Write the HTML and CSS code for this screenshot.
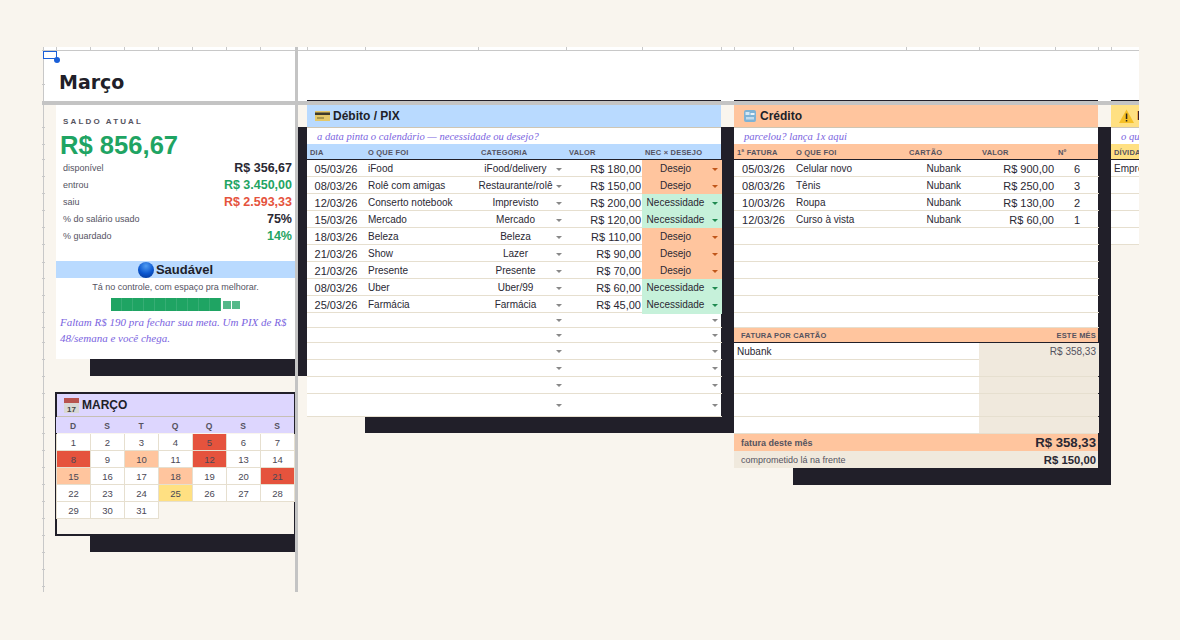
FILE: index.html
```html
<!DOCTYPE html>
<html lang="pt-BR">
<head>
  <meta charset="UTF-8">
  <title>Março</title>
  <link rel="stylesheet" href="styles.css">
</head>
<body>
  <div class="sheet">
    <div class="title-row"><h1>Março</h1></div>

    <div class="content">
      <div class="side">
        <section class="saldo">
          <div class="saldo-label">SALDO ATUAL</div>
          <div class="saldo-value">R$ 856,67</div>
          <div class="stat"><span>disponível</span><b>R$ 356,67</b></div>
          <div class="stat"><span>entrou</span><b class="green">R$ 3.450,00</b></div>
          <div class="stat"><span>saiu</span><b class="red">R$ 2.593,33</b></div>
          <div class="stat"><span>% do salário usado</span><b>75%</b></div>
          <div class="stat"><span>% guardado</span><b class="green">14%</b></div>
          <div class="status">
            <svg class="ico-ball" viewBox="0 0 16 16">
              <defs>
                <radialGradient id="ball" cx="50%" cy="25%" r="80%">
                  <stop offset="0" stop-color="#4f9cf2"/>
                  <stop offset="0.6" stop-color="#0c57cf"/>
                  <stop offset="1" stop-color="#063a9c"/>
                </radialGradient>
              </defs>
              <circle cx="8" cy="8" r="8" fill="url(#ball)"/>
            </svg>
            Saudável
          </div>
          <div class="status-text">Tá no controle, com espaço pra melhorar.</div>
          <div class="progress">
            <i></i><i></i><i></i><i></i><i></i><i></i><i></i><i></i><i></i><i></i>
            <i class="rest"></i><i class="rest"></i>
          </div>
          <p class="hand tip">Faltam R$ 190 pra fechar sua meta. Um PIX de R$ 48/semana e você chega.</p>
        </section>

        <section class="calendar">
          <div class="cal-title">
            <svg class="ico" viewBox="0 0 15 15">
              <rect y="0" width="15" height="15" fill="#d8d8d4"/>
              <rect y="0" width="15" height="5" fill="#b8534e"/>
              <text x="7.5" y="13.5" text-anchor="middle" class="ico-num">17</text>
            </svg>
            MARÇO
          </div>
          <div class="cal-grid">
            <div class="dow">D</div><div class="dow">S</div><div class="dow">T</div><div class="dow">Q</div><div class="dow">Q</div><div class="dow">S</div><div class="dow">S</div>
            <div class="day">1</div><div class="day">2</div><div class="day">3</div><div class="day">4</div><div class="day hot">5</div><div class="day">6</div><div class="day">7</div>
            <div class="day hot">8</div><div class="day">9</div><div class="day warm">10</div><div class="day">11</div><div class="day hot">12</div><div class="day">13</div><div class="day">14</div>
            <div class="day warm">15</div><div class="day">16</div><div class="day">17</div><div class="day warm">18</div><div class="day">19</div><div class="day">20</div><div class="day hot">21</div>
            <div class="day">22</div><div class="day">23</div><div class="day">24</div><div class="day today">25</div><div class="day">26</div><div class="day">27</div><div class="day">28</div>
            <div class="day">29</div><div class="day">30</div><div class="day">31</div>
          </div>
        </section>
      </div>

      <section class="panel debit">
        <div class="panel-title">
          <svg class="ico-card" viewBox="0 0 15 10">
            <rect width="15" height="10" fill="#e4c869"/>
            <rect y="1.5" width="15" height="2.5" fill="#3d3a2c"/>
            <rect x="2" y="6" width="7" height="2" fill="#a8974f"/>
          </svg>
          Débito / PIX
        </div>
        <div class="hand panel-sub">a data pinta o calendário — necessidade ou desejo?</div>
        <div class="row head">
          <div>DIA</div><div>O QUE FOI</div><div>CATEGORIA</div><div>VALOR</div><div>NEC × DESEJO</div>
        </div>
        <div class="row"><div class="date">05/03/26</div><div class="what">iFood</div><div class="sel"><span>iFood/delivery</span></div><div class="money">R$ 180,00</div><div class="sel want"><span>Desejo</span></div></div>
        <div class="row"><div class="date">08/03/26</div><div class="what">Rolê com amigas</div><div class="sel"><span>Restaurante/rolê</span></div><div class="money">R$ 150,00</div><div class="sel want"><span>Desejo</span></div></div>
        <div class="row"><div class="date">12/03/26</div><div class="what">Conserto notebook</div><div class="sel"><span>Imprevisto</span></div><div class="money">R$ 200,00</div><div class="sel need"><span>Necessidade</span></div></div>
        <div class="row"><div class="date">15/03/26</div><div class="what">Mercado</div><div class="sel"><span>Mercado</span></div><div class="money">R$ 120,00</div><div class="sel need"><span>Necessidade</span></div></div>
        <div class="row"><div class="date">18/03/26</div><div class="what">Beleza</div><div class="sel"><span>Beleza</span></div><div class="money">R$ 110,00</div><div class="sel want"><span>Desejo</span></div></div>
        <div class="row"><div class="date">21/03/26</div><div class="what">Show</div><div class="sel"><span>Lazer</span></div><div class="money">R$ 90,00</div><div class="sel want"><span>Desejo</span></div></div>
        <div class="row"><div class="date">21/03/26</div><div class="what">Presente</div><div class="sel"><span>Presente</span></div><div class="money">R$ 70,00</div><div class="sel want"><span>Desejo</span></div></div>
        <div class="row"><div class="date">08/03/26</div><div class="what">Uber</div><div class="sel"><span>Uber/99</span></div><div class="money">R$ 60,00</div><div class="sel need"><span>Necessidade</span></div></div>
        <div class="row"><div class="date">25/03/26</div><div class="what">Farmácia</div><div class="sel"><span>Farmácia</span></div><div class="money">R$ 45,00</div><div class="sel need"><span>Necessidade</span></div></div>
        <div class="row short"><div></div><div></div><div class="sel"><span></span></div><div></div><div class="sel"><span></span></div></div>
        <div class="row short"><div></div><div></div><div class="sel"><span></span></div><div></div><div class="sel"><span></span></div></div>
        <div class="row"><div></div><div></div><div class="sel"><span></span></div><div></div><div class="sel"><span></span></div></div>
        <div class="row"><div></div><div></div><div class="sel"><span></span></div><div></div><div class="sel"><span></span></div></div>
        <div class="row"><div></div><div></div><div class="sel"><span></span></div><div></div><div class="sel"><span></span></div></div>
        <div class="row tall"><div></div><div></div><div class="sel"><span></span></div><div></div><div class="sel"><span></span></div></div>
      </section>

      <section class="panel credit">
        <div class="panel-title">
          <svg class="ico-tile" viewBox="0 0 12 12">
            <rect width="12" height="12" rx="2" fill="#7eb3d6"/>
            <rect x="1.5" y="2" width="4" height="3" fill="#d5e8f4"/>
            <rect x="6.5" y="3" width="4" height="2" fill="#eaf3f9"/>
            <rect x="2" y="7" width="8" height="2.5" fill="#c3dced"/>
          </svg>
          Crédito
        </div>
        <div class="hand panel-sub">parcelou? lança 1x aqui</div>
        <div class="row head">
          <div>1ª FATURA</div><div>O QUE FOI</div><div>CARTÃO</div><div>VALOR</div><div>Nº</div>
        </div>
        <div class="row"><div class="date">05/03/26</div><div class="what">Celular novo</div><div class="card">Nubank</div><div class="money">R$ 900,00</div><div class="num">6</div></div>
        <div class="row"><div class="date">08/03/26</div><div class="what">Tênis</div><div class="card">Nubank</div><div class="money">R$ 250,00</div><div class="num">3</div></div>
        <div class="row"><div class="date">10/03/26</div><div class="what">Roupa</div><div class="card">Nubank</div><div class="money">R$ 130,00</div><div class="num">2</div></div>
        <div class="row"><div class="date">12/03/26</div><div class="what">Curso à vista</div><div class="card">Nubank</div><div class="money">R$ 60,00</div><div class="num">1</div></div>
        <div class="row"></div>
        <div class="row"></div>
        <div class="row"></div>
        <div class="row"></div>
        <div class="row"></div>
        <div class="row short"></div>

        <div class="bill head-bill"><div>FATURA POR CARTÃO</div><div>ESTE MÊS</div></div>
        <div class="bill"><div class="bill-name">Nubank</div><div class="bill-val">R$ 358,33</div></div>
        <div class="bill"><div></div><div class="bill-val"></div></div>
        <div class="bill"><div></div><div class="bill-val"></div></div>
        <div class="bill tall"><div></div><div class="bill-val"></div></div>
        <div class="bill"><div></div><div class="bill-val"></div></div>
        <div class="total"><span>fatura deste mês</span><b>R$ 358,33</b></div>
        <div class="total later"><span>comprometido lá na frente</span><b>R$ 150,00</b></div>
      </section>

      <section class="panel debts">
        <div class="panel-title">
          <svg class="ico-warn" viewBox="0 0 15 14">
            <path d="M7.5 0.5 L15 14 H0 Z" fill="#f6c026"/>
            <rect x="6.8" y="4.5" width="1.5" height="5.5" fill="#2a2620"/>
            <rect x="6.8" y="11" width="1.5" height="1.5" fill="#2a2620"/>
          </svg>
          Dívidas
        </div>
        <div class="hand panel-sub">o que ainda devo</div>
        <div class="row head"><div>DÍVIDA</div></div>
        <div class="row"><div>Empréstimo</div></div>
        <div class="row"></div>
        <div class="row"></div>
        <div class="row"></div>
        <div class="row"></div>
      </section>
    </div>

    <!-- marcas das linhas/colunas e paineis congelados -->
    <svg class="rulers" width="1097" height="545">
      <path d="M1.5 0V545M0 3.5H1097" stroke="#c8c8c8" fill="none"/>
      <path d="M14.5 0v3M48.5 0v3M82.5 0v3M116.5 0v3M150.5 0v3M184.5 0v3M218.5 0v3M265.5 0v3M323.5 0v3M436.5 0v3M524.5 0v3M600.5 0v3M679.5 0v3M692.5 0v3M751.5 0v3M864.5 0v3M937.5 0v3M1013.5 0v3M1056.5 0v3M1069.5 0v3" stroke="#c8c8c8" fill="none"/>
      <path d="M0 37.5h3M0 80.5h3M0 97.5h3M0 112.5h3M0 129.5h3M0 146.5h3M0 163.5h3M0 180.5h3M0 197.5h3M0 215.5h3M0 231.5h3M0 248.5h3M0 265.5h3M0 280.5h3M0 295.5h3M0 312.5h3M0 329.5h3M0 346.5h3M0 370.5h3M0 386.5h3M0 403.5h3M0 420.5h3M0 437.5h3M0 454.5h3M0 471.5h3M0 488.5h3M0 505.5h3M0 522.5h3M0 539.5h3" stroke="#c8c8c8" fill="none"/>
    </svg>
    <div class="freeze-h"></div>
    <div class="freeze-v"></div>
    <div class="cursor"></div>
  </div>
</body>
</html>
```

FILE: styles.css
```css
* {
  box-sizing: border-box;
}
body {
  margin: 0;
  background-color: #f9f5ee;
  color: #211f29;
  font-family: "Liberation Sans", Arial, sans-serif;
}
.sheet {
  position: relative;
  width: 1097px;
  height: 545px;
  margin: 47px 0 0 42px;
  overflow: hidden;
}
.title-row {
  height: 54px;
  margin-left: 2px;
  padding: 8px 0 0 15px;
  background-color: #fff;
}
.title-row h1 {
  margin: 0;
  font-family: "DejaVu Sans", sans-serif;
  font-size: 19px;
  font-weight: bold;
  line-height: 54px;
  color: #211f29;
}
.content {
  display: flex;
  align-items: flex-start;
  padding: 4px 0 0 14px;
  isolation: isolate;
}
.side {
  flex: none;
  width: 239px;
  margin-right: 12px;
}

/* saldo */
.saldo {
  position: relative;
  height: 254px;
  background-color: #fff;
}
.saldo::before {
  content: "";
  position: absolute;
  z-index: -1;
  top: 22px;
  left: 34px;
  right: -12px;
  bottom: -17px;
  background-color: #211f29;
}
.saldo-label {
  padding: 12px 0 0 7px;
  font-size: 8px;
  font-weight: bold;
  letter-spacing: 2.15px;
  line-height: 10px;
  color: #55535f;
}
.saldo-value {
  padding-left: 4px;
  font-size: 25.6px;
  font-weight: bold;
  line-height: 36px;
  height: 32px;
  color: #1fa463;
}
.stat {
  display: flex;
  justify-content: space-between;
  align-items: center;
  height: 17px;
  padding: 0 3px 0 7px;
  font-size: 9px;
  color: #55535f;
}
.stat b {
  font-size: 12.5px;
  color: #2a2833;
}
.stat b.green {
  color: #1fa463;
}
.stat b.red {
  color: #e5533d;
}
.status {
  display: flex;
  justify-content: center;
  align-items: center;
  gap: 2px;
  height: 17px;
  margin-top: 17px;
  background-color: #b9daff;
  font-size: 13px;
  font-weight: bold;
}
.ico-ball {
  width: 16px;
  height: 16px;
}
.status-text {
  padding-top: 3px;
  height: 19px;
  font-size: 9px;
  line-height: 12px;
  text-align: center;
  color: #55535f;
}
.progress {
  display: flex;
  align-items: center;
  height: 15px;
  padding-left: 55px;
}
.progress i {
  width: 11px;
  height: 13px;
  background-color: #1fa463;
  border-right: 1px solid #37ad74;
}
.progress i.rest {
  width: 8px;
  height: 8px;
  margin-left: 1.5px;
  border: 0;
  background-color: #55b98a;
}
.hand {
  font-family: "Liberation Serif", serif;
  font-style: italic;
  color: #7a64e0;
}
.tip {
  margin: 2px 0 0;
  padding: 0 4px;
  font-size: 11px;
  line-height: 16px;
}

/* calendario */
.calendar {
  position: relative;
  height: 144px;
  margin-top: 33px;
  margin-left: -1px;
  margin-right: -1px;
  border: 2px solid #211f29;
}
.calendar::before {
  content: "";
  position: absolute;
  z-index: -1;
  top: 100%;
  left: 33px;
  right: -1px;
  height: 18px;
  background-color: #211f29;
}
.cal-title {
  display: flex;
  align-items: center;
  gap: 3px;
  height: 23px;
  padding-left: 7px;
  background-color: #ddd6fe;
  border-bottom: 1px solid #c6bfb4;
  font-size: 12px;
  font-weight: bold;
}
.ico {
  width: 15px;
  height: 15px;
}
.ico-num {
  font-size: 8px;
  font-family: "Liberation Sans", sans-serif;
  fill: #444;
}
.cal-grid {
  display: grid;
  grid-template-columns: repeat(7, 34px);
  grid-auto-rows: 17px;
  margin: 0 -2px 0 -1px;
}
.dow {
  display: flex;
  align-items: center;
  justify-content: center;
  height: 16px;
  padding-top: 1px;
  background-color: #ddd6fe;
  font-size: 8.5px;
  font-weight: bold;
  color: #55535f;
}
.day {
  display: flex;
  align-items: center;
  justify-content: center;
  background-color: #fff;
  border-right: 1px solid #e6dfcf;
  border-bottom: 1px solid #e6dfcf;
  border-left: 1px solid #e6dfcf;
  margin-right: -1px;
  font-size: 9.5px;
  color: #4a4855;
}
.day.hot {
  background-color: #e5533d;
}
.day.warm {
  background-color: #ffc59e;
}
.day.today {
  background-color: #ffe082;
}

/* blocos */
.panel {
  position: relative;
  flex: none;
  margin-right: 13px;
  background-color: #fff;
}
.panel::before {
  content: "";
  position: absolute;
  z-index: -1;
  top: 22px;
  right: -14px;
  bottom: -16px;
  background-color: #211f29;
}
.panel::after {
  content: "";
  position: absolute;
  top: -5px;
  left: 0;
  right: 0;
  height: 2px;
  background-color: #211f29;
}
.debit {
  width: 414px;
}
.debit::before {
  left: 58px;
}
.credit {
  width: 364px;
}
.credit::before {
  left: 59px;
  right: -13px;
  bottom: -17px;
}
.debts {
  width: 200px;
  margin-right: 0;
}
.debts::before {
  display: none;
}
.panel-title {
  display: flex;
  align-items: center;
  gap: 3px;
  height: 23px;
  padding-left: 8px;
  border-bottom: 1px solid #cfc6b4;
  font-size: 12px;
  font-weight: bold;
}
.debit .panel-title {
  background-color: #b9daff;
}
.credit .panel-title {
  padding-left: 10px;
  gap: 4px;
  background-color: #ffc59e;
}
.debts .panel-title {
  background-color: #ffe082;
  gap: 3px;
}
.ico-card {
  width: 15px;
  height: 10px;
}
.ico-tile {
  width: 12px;
  height: 12px;
}
.ico-warn {
  width: 15px;
  height: 14px;
}
.panel-sub {
  height: 16px;
  padding-left: 10px;
  font-size: 10.6px;
  line-height: 18px;
}

/* linhas */
.row {
  display: grid;
  height: 17px;
  margin-right: -1px;
  border-bottom: 1px solid #e6dfcf;
  font-size: 10px;
  line-height: 18px;
  color: #2a2833;
}
.debit .row {
  grid-template-columns: 58px 113px 88px 76px 80px;
}
.credit .row {
  grid-template-columns: 59px 113px 73px 76px 44px;
}
.debts .row {
  grid-template-columns: 1fr;
  padding-left: 3px;
}
.row.short {
  height: 15px;
}
.row.tall {
  height: 23px;
  line-height: 22px;
}
.row.head {
  height: 16px;
  margin-right: 0;
  border-bottom: 1px solid #211f29;
  font-size: 7.5px;
  font-weight: bold;
  line-height: 17px;
  letter-spacing: 0.2px;
  color: #55535f;
}
.row.head div {
  padding-left: 3px;
}
.debit .head {
  background-color: #b9daff;
}
.credit .head {
  background-color: #ffc59e;
}
.debts .row.head {
  padding-left: 0;
  background-color: #ffe082;
}
.date {
  font-size: 11px;
  text-align: center;
}
.what {
  padding-left: 3px;
}
.money {
  padding-right: 1px;
  font-size: 11px;
  text-align: right;
}
.card {
  padding-right: 18px;
  text-align: right;
}
.num {
  font-size: 11px;
  text-align: center;
}
.sel {
  display: flex;
  align-items: center;
  min-width: 0;
  padding-right: 4px;
}
.sel span {
  flex: 1;
  min-width: 0;
  overflow: hidden;
  white-space: nowrap;
  text-align: center;
}
.sel::after {
  content: "";
  flex: none;
  width: 0;
  height: 0;
  margin-left: 3px;
  border-top: 3px solid #888;
  border-left: 3.5px solid transparent;
  border-right: 3.5px solid transparent;
}
.sel.want {
  background-color: #ffc59e;
}
.sel.want::after {
  border-top-color: #c0561a;
}
.sel.need {
  background-color: #c6f1da;
}
.sel.need::after {
  border-top-color: #1f8a50;
}

/* fatura */
.bill {
  display: grid;
  grid-template-columns: 245px 120px;
  height: 17px;
  border-bottom: 1px solid #e6dfcf;
  font-size: 10px;
  line-height: 18px;
  color: #2a2833;
}
.bill.tall {
  height: 23px;
}
.bill.head-bill {
  height: 15px;
  border-bottom: 1px solid #211f29;
  background-color: #ffc59e;
  font-size: 7.5px;
  font-weight: bold;
  line-height: 16px;
  letter-spacing: 0.2px;
  color: #55535f;
}
.head-bill div:first-child {
  padding-left: 7px;
}
.head-bill div:last-child {
  padding-right: 3px;
  text-align: right;
}
.bill-name {
  padding-left: 3px;
}
.bill-val {
  padding-right: 3px;
  background-color: #f0e9dd;
  color: #55535f;
  text-align: right;
}
.total {
  display: flex;
  justify-content: space-between;
  align-items: center;
  height: 17px;
  padding: 0 2px 0 7px;
  background-color: #ffc59e;
  font-size: 9px;
  font-weight: bold;
  color: #55535f;
}
.total b {
  font-size: 13.2px;
  color: #2a2833;
}
.total.later {
  background-color: #f0e9dd;
  font-weight: normal;
}
.total.later b {
  font-size: 11.3px;
}

/* por cima da planilha */
.rulers {
  position: absolute;
  top: 0;
  left: 0;
}
.freeze-h {
  position: absolute;
  top: 54px;
  left: 0;
  width: 100%;
  height: 4px;
  background-color: #c4c4c4;
}
.freeze-v {
  position: absolute;
  top: 0;
  left: 253px;
  width: 3px;
  height: 100%;
  background-color: #c4c4c4;
}
.cursor {
  position: absolute;
  top: 4px;
  left: 1px;
  width: 14px;
  height: 8px;
  border: 1px solid #1a5fd8;
}
.cursor::after {
  content: "";
  position: absolute;
  right: -4px;
  bottom: -5px;
  width: 6px;
  height: 6px;
  border-radius: 50%;
  background-color: #1a5fd8;
}
```
